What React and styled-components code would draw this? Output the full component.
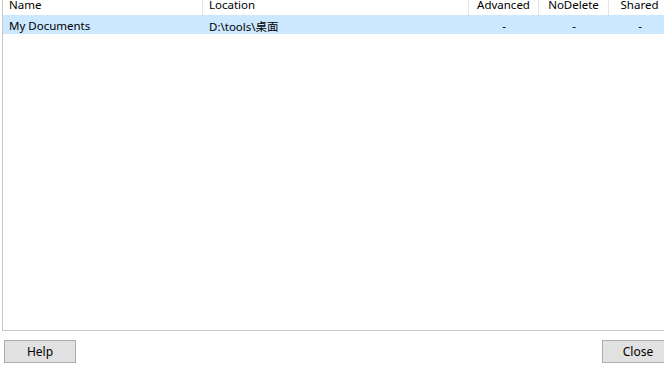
import React from "react";
import styled, { createGlobalStyle } from "styled-components";

const GlobalStyle = createGlobalStyle`
  html, body {
    margin: 0;
    padding: 0;
    background: #ffffff;
    overflow: hidden;
  }
  body {
    font-family: "Noto Sans", "Noto Sans CJK SC", sans-serif;
    font-size: 11.5px;
    color: #000;
  }
`;

const columns = [
  { key: "name", title: "Name", width: 200, align: "left" },
  { key: "location", title: "Location", width: 266, align: "left" },
  { key: "advanced", title: "Advanced", width: 70, align: "center" },
  { key: "nodelete", title: "NoDelete", width: 70, align: "center" },
  { key: "shared", title: "Shared", width: 62, align: "center" },
];

const rows = [
  {
    name: "My Documents",
    location: "D:\\tools\\桌面",
    advanced: "-",
    nodelete: "-",
    shared: "-",
  },
];

const App = () => {
  return (
    <>
      <GlobalStyle />
      <Dialog>
        <List>
          <Header>
            {columns.map((c) => (
              <HeaderCell key={c.key} width={c.width} align={c.align}>
                {c.title}
              </HeaderCell>
            ))}
          </Header>
          {rows.map((r, i) => (
            <Row key={i} selected>
              {columns.map((c) => (
                <Cell key={c.key} width={c.width} align={c.align}>
                  {r[c.key]}
                </Cell>
              ))}
            </Row>
          ))}
        </List>
        <Buttons>
          <Button>Help</Button>
          <Button>Close</Button>
        </Buttons>
      </Dialog>
    </>
  );
};

export default App;

const Dialog = styled.div`
  width: 678px;
  height: 369px;
  display: flex;
  flex-direction: column;
`;

const List = styled.div`
  margin: 0 2px;
  height: 331px;
  border-left: 1px solid #c8c8c8;
  border-right: 1px solid #c8c8c8;
  border-bottom: 1px solid #c8c8c8;
  box-sizing: border-box;
  background: #fff;
  display: flex;
  flex-direction: column;
`;

const Header = styled.div`
  display: flex;
  height: 15px;
  flex-shrink: 0;
  overflow: hidden;
`;

const HeaderCell = styled.div`
  width: ${(p) => p.width}px;
  flex-shrink: 0;
  box-sizing: border-box;
  border-right: 1px solid #e5e5e5;
  padding: 0 6px;
  text-align: ${(p) => p.align};
  line-height: 12px;
  margin-top: -1px;
  height: 16px;
  color: #000;
  white-space: nowrap;
  overflow: hidden;
`;

const Row = styled.div`
  display: flex;
  height: 19px;
  box-sizing: border-box;
  padding-top: 2px;
  align-items: center;
  background: ${(p) => (p.selected ? "#cce8ff" : "transparent")};
`;

const Cell = styled.div`
  width: ${(p) => p.width}px;
  flex-shrink: 0;
  box-sizing: border-box;
  padding: 0 6px;
  text-align: ${(p) => p.align};
  white-space: nowrap;
  overflow: hidden;
`;

const Buttons = styled.div`
  display: flex;
  justify-content: space-between;
  padding: 9px 4px 0 4px;
`;

const Button = styled.button`
  width: 72px;
  height: 23px;
  box-sizing: border-box;
  background: #e1e1e1;
  border: 1px solid #adadad;
  font-family: "Noto Sans", sans-serif;
  font-size: 12px;
  color: #000;
  padding: 0;
`;
